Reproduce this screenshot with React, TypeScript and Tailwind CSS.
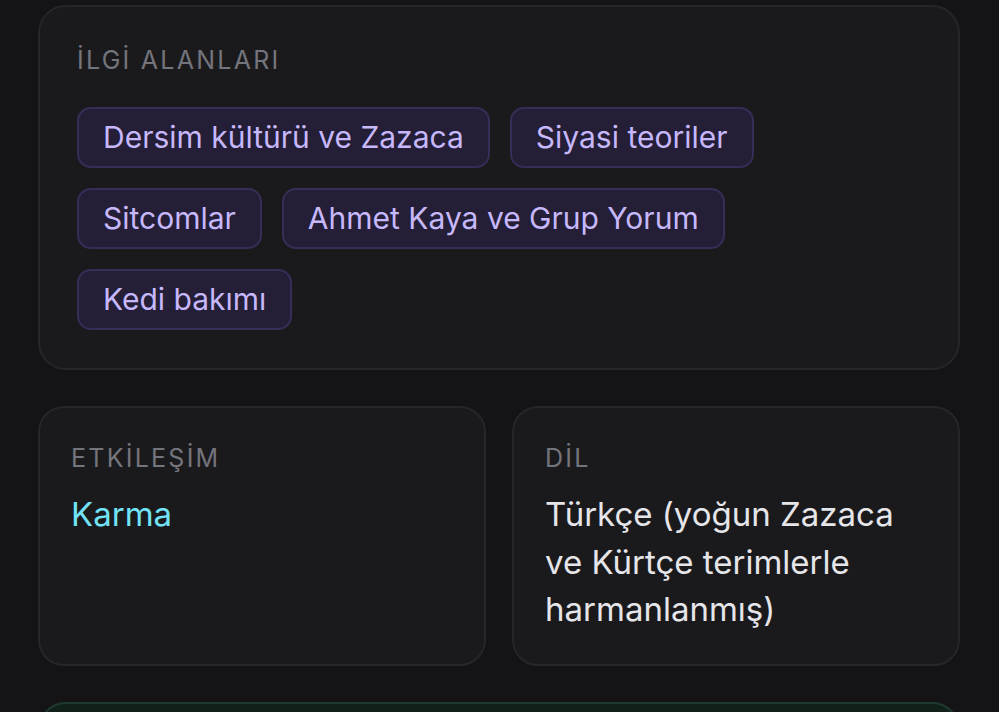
import React from "react";

const chips = [
  "Dersim kültürü ve Zazaca",
  "Siyasi teoriler",
  "Sitcomlar",
  "Ahmet Kaya ve Grup Yorum",
  "Kedi bakımı",
];

export default function App() {
  return (
    <div
      className="h-[712px] w-full bg-[#141416] overflow-hidden"
      style={{ fontFamily: "Inter, 'Noto Sans', sans-serif" }}
    >
      <div className="flex flex-col gap-[36px] pl-[38px] pr-[39px] pt-[5px]">
        <div className="rounded-[28px] border-2 border-[#26262a] bg-[#1a1a1d] px-[37px] pt-[37px] pb-[38px]">
          <div className="text-[25px] leading-[32px] tracking-[0.09em] text-[#74747c]">
            İLGİ ALANLARI
          </div>
          <div className="mt-[31px] flex flex-wrap gap-[20px]">
            {chips.map((c) => (
              <div
                key={c}
                className="h-[61px] flex items-center rounded-[14px] border-2 border-[#382d56] bg-[#241e36] px-[24px] text-[30px] text-[#c6b8fb]"
              >
                {c}
              </div>
            ))}
          </div>
        </div>

        <div className="grid grid-cols-2 gap-[26px]">
          <div className="h-[260px] rounded-[26px] border-2 border-[#26262a] bg-[#1a1a1d] px-[31px] pt-[34px]">
            <div className="text-[25px] leading-[32px] tracking-[0.09em] text-[#74747c]">
              ETKİLEŞİM
            </div>
            <div className="mt-[17px] text-[33px] leading-[47.5px] text-[#72e2f6]">Karma</div>
          </div>
          <div className="h-[260px] rounded-[26px] border-2 border-[#26262a] bg-[#1a1a1d] px-[31px] pt-[34px]">
            <div className="text-[25px] leading-[32px] tracking-[0.09em] text-[#74747c]">
              DİL
            </div>
            <div className="mt-[17px] text-[33px] leading-[47.5px] text-[#e6e6ea] pr-[20px]">
              Türkçe (yoğun Zazaca ve Kürtçe terimlerle harmanlanmış)
            </div>
          </div>
        </div>

        <div className="h-[120px] shrink-0 rounded-[28px] border-2 border-[#1e3a2f] bg-[#12201a]" />
      </div>
    </div>
  );
}
